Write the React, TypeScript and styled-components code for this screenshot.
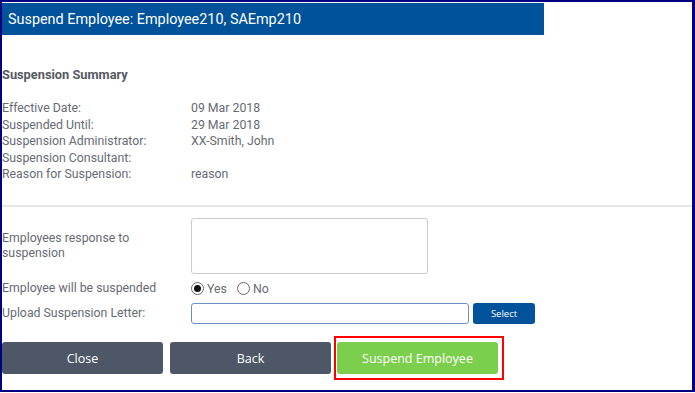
import React, { useState } from "react";
import styled, { createGlobalStyle } from "styled-components";

const GlobalStyle = createGlobalStyle`
  html, body {
    margin: 0;
    padding: 0;
    background: #ffffff;
  }
  body {
    font-family: Roboto, "Noto Sans", Arial, sans-serif;
  }
`;

const Frame = styled.div`
  box-sizing: border-box;
  width: 695px;
  height: 392px;
  border: 2px solid #000080;
  border-right-width: 3px;
  background: #fff;
  overflow: hidden;
`;

const TitleBar = styled.div`
  width: 542px;
  height: 32px;
  margin-top: 1px;
  background: #00529b;
  color: #fff;
  font-size: 14.4px;
  display: flex;
  align-items: center;
  padding-left: 6px;
  box-sizing: border-box;
`;

const Summary = styled.section`
  padding: 32px 0 0 0;
  color: #666b73;
  font-size: 12.3px;
`;

const SectionTitle = styled.div`
  font-weight: bold;
  font-size: 12.8px;
  color: #555a62;
  margin-bottom: 19px;
`;

const InfoGrid = styled.div`
  display: grid;
  grid-template-columns: 189px 1fr;
  grid-auto-rows: 14px;
  row-gap: 2.5px;
  line-height: 14px;
`;

const Divider = styled.hr`
  border: none;
  border-top: 2px solid #e6e6e6;
  margin: 24px 0 11px 0;
`;

const FormRow = styled.div`
  display: grid;
  grid-template-columns: 189px auto;
  align-items: center;
  font-size: 12.3px;
  color: #666b73;
`;

const FieldLabel = styled.label`
  line-height: 15px;
  padding-right: 30px;
`;

const TextArea = styled.textarea`
  box-sizing: border-box;
  width: 237px;
  height: 56px;
  border: 1px solid #cccccc;
  border-radius: 3px;
  resize: none;
  margin: 0;
`;

const RadioGroup = styled.div`
  display: flex;
  align-items: center;
  gap: 10px;
  height: 29px;
`;

const RadioOption = styled.span`
  display: flex;
  align-items: center;
  gap: 3px;
`;

const RadioCircle = styled.span<{ $checked?: boolean }>`
  box-sizing: border-box;
  width: 13px;
  height: 13px;
  border-radius: 50%;
  border: 1px solid #666;
  display: inline-flex;
  align-items: center;
  justify-content: center;
  &::after {
    content: "";
    width: 7px;
    height: 7px;
    border-radius: 50%;
    background: ${(p) => (p.$checked ? "#111" : "transparent")};
  }
`;

const UploadGroup = styled.div`
  display: flex;
  align-items: center;
  gap: 4px;
`;

const FileInput = styled.input`
  box-sizing: border-box;
  width: 278px;
  height: 21px;
  border: 1px solid #6e8fc6;
  border-radius: 3px;
  margin: 0;
`;

const SmallButton = styled.button`
  width: 62px;
  height: 21px;
  border: none;
  border-radius: 3px;
  background: #00529b;
  color: #fff;
  font-family: "Open Sans", sans-serif;
  font-size: 9.5px;
  padding: 0;
`;

const ButtonBar = styled.div`
  display: flex;
  align-items: center;
  gap: 7px;
  margin-top: 12px;
`;

const Highlight = styled.div`
  border: 2px solid #ff0000;
  padding: 4px 4px 4px 1px;
  margin-left: -4px;
`;

const ActionButton = styled.button<{ $variant?: "dark" | "green" }>`
  width: 161px;
  height: 32px;
  border: none;
  border-radius: 3px;
  background: ${(p) => (p.$variant === "green" ? "#7ccf4d" : "#4e5768")};
  color: #fff;
  font-family: "Open Sans", sans-serif;
  font-size: 12.5px;
  padding: 0;
`;

const summary: [string, string][] = [
  ["Effective Date:", "09 Mar 2018"],
  ["Suspended Until:", "29 Mar 2018"],
  ["Suspension Administrator:", "XX-Smith, John"],
  ["Suspension Consultant:", ""],
  ["Reason for Suspension:", "reason"],
];

export default function App() {
  const [suspended, setSuspended] = useState(true);

  return (
    <>
      <GlobalStyle />
      <Frame>
        <TitleBar>Suspend Employee: Employee210, SAEmp210</TitleBar>
        <Summary>
          <SectionTitle>Suspension Summary</SectionTitle>
          <InfoGrid>
            {summary.map(([label, value]) => (
              <React.Fragment key={label}>
                <span>{label}</span>
                <span>{value}</span>
              </React.Fragment>
            ))}
          </InfoGrid>
        </Summary>
        <Divider />
        <FormRow>
          <FieldLabel>Employees response to suspension</FieldLabel>
          <TextArea />
        </FormRow>
        <FormRow>
          <FieldLabel>Employee will be suspended</FieldLabel>
          <RadioGroup>
            <RadioOption onClick={() => setSuspended(true)}>
              <RadioCircle $checked={suspended} />
              Yes
            </RadioOption>
            <RadioOption onClick={() => setSuspended(false)}>
              <RadioCircle $checked={!suspended} />
              No
            </RadioOption>
          </RadioGroup>
        </FormRow>
        <FormRow>
          <FieldLabel>Upload Suspension Letter:</FieldLabel>
          <UploadGroup>
            <FileInput type="text" />
            <SmallButton>Select</SmallButton>
          </UploadGroup>
        </FormRow>
        <ButtonBar>
          <ActionButton>Close</ActionButton>
          <ActionButton>Back</ActionButton>
          <Highlight>
            <ActionButton $variant="green">Suspend Employee</ActionButton>
          </Highlight>
        </ButtonBar>
      </Frame>
    </>
  );
}
